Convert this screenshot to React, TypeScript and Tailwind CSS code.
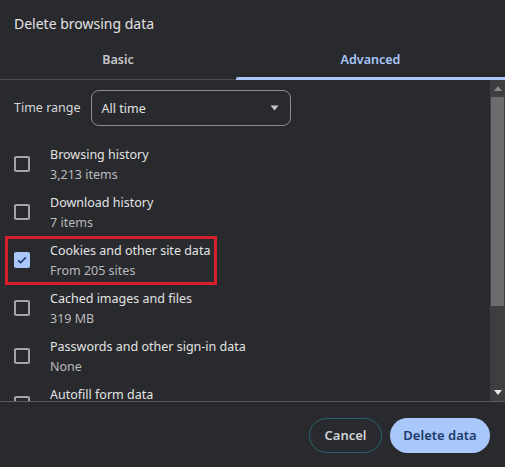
import React from 'react';

const ROWS = [
  { title: 'Browsing history', sub: '3,213 items', checked: false },
  { title: 'Download history', sub: '7 items', checked: false },
  { title: 'Cookies and other site data', sub: 'From 205 sites', checked: true },
  { title: 'Cached images and files', sub: '319 MB', checked: false },
  { title: 'Passwords and other sign-in data', sub: 'None', checked: false },
  { title: 'Autofill form data', sub: '', checked: false },
];

function Checkbox({ checked }: { checked: boolean }) {
  if (checked) {
    return (
      <div className="flex h-4 w-4 shrink-0 items-center justify-center rounded-[2px] bg-[#a8c7fa]">
        <svg width="12" height="12" viewBox="0 0 12 12" aria-hidden>
          <path d="M2.2 6.3 L4.7 8.7 L9.8 3.4" fill="none" stroke="#1f3760" strokeWidth="1.6" />
        </svg>
      </div>
    );
  }
  return <div className="h-4 w-4 shrink-0 rounded-[2px] border-2 border-[#a3a5a8]" />;
}

export default function App() {
  return (
    <div
      className="flex h-[467px] w-[505px] flex-col overflow-hidden bg-[#292a2d] text-[#e3e3e3]"
      style={{ fontFamily: '"Noto Sans", "Open Sans", sans-serif' }}
    >
      <div className="h-[45px] px-[14px] pt-[14px] text-[14px] leading-[20px]">Delete browsing data</div>

      <div className="flex h-[35px] border-b border-[#4a4b4e] text-[12.5px] font-semibold">
        <div className="flex w-[236px] items-center justify-center pb-[4px] text-[#c6c7c9]">Basic</div>
        <div className="relative flex flex-1 items-center justify-center pb-[4px] text-[#a8c7fa]">
          Advanced
          <div className="absolute bottom-[-1px] left-0 right-0 h-[3px] rounded-tl-[2px] bg-[#a8c7fa]" />
        </div>
      </div>

      <div className="flex h-[322px] border-b border-[#5a5b5e]">
        <div className="relative flex-1 overflow-hidden">
          <div className="flex items-center gap-[10px] pl-[14px] pt-[10px]">
            <span className="text-[12.5px] text-[#d6d7d9]">Time range</span>
            <div className="flex h-[36px] w-[200px] items-center justify-between rounded-[8px] border border-[#8d8f93] pl-[10px] pr-[11px] text-[12.5px]">
              <span className="pt-[2px]">All time</span>
              <svg width="9" height="6" viewBox="0 0 9 6" aria-hidden>
                <path d="M0.5 0.5 L8.5 0.5 L4.5 5.5 Z" fill="#c4c7c5" />
              </svg>
            </div>
          </div>

          <div className="mt-[14px] flex flex-col">
            {ROWS.map((r) => (
              <div key={r.title} className="flex h-[48px] items-center pl-[14px]">
                <Checkbox checked={r.checked} />
                <div className="ml-[20px] flex flex-col pt-[1px]">
                  <span className="h-[20px] text-[12.5px] leading-[20px] text-[#e3e3e3]">{r.title}</span>
                  <span className="h-[20px] text-[12.5px] leading-[20px] text-[#b9babd]">{r.sub}</span>
                </div>
              </div>
            ))}
          </div>

          <div className="absolute left-[5px] top-[156px] h-[49px] w-[212px] border-[3px] border-[#d8202c]" />
        </div>

        <div className="flex w-[15px] flex-col bg-[#3d3e40]">
          <div className="flex h-[17px] items-center justify-center">
            <svg width="8" height="5" viewBox="0 0 8 5" aria-hidden>
              <path d="M0 5 L4 0 L8 5 Z" fill="#8a8b8d" />
            </svg>
          </div>
          <div className="mx-[1px] h-[209px] bg-[#6b6c6e]" />
          <div className="flex-1" />
          <div className="flex h-[17px] items-center justify-center">
            <svg width="8" height="5" viewBox="0 0 8 5" aria-hidden>
              <path d="M0 0 L8 0 L4 5 Z" fill="#e8e8e8" />
            </svg>
          </div>
        </div>
      </div>

      <div className="flex justify-end gap-[8px] pr-[15px] pt-[16px] text-[13px] font-semibold">
        <button className="h-[35px] w-[73px] rounded-full border border-[#2a6270] text-[#d0d2d5]">Cancel</button>
        <button className="h-[35px] w-[100px] rounded-full bg-[#a8c7fa] text-[#1d3a6b]">Delete data</button>
      </div>
    </div>
  );
}
